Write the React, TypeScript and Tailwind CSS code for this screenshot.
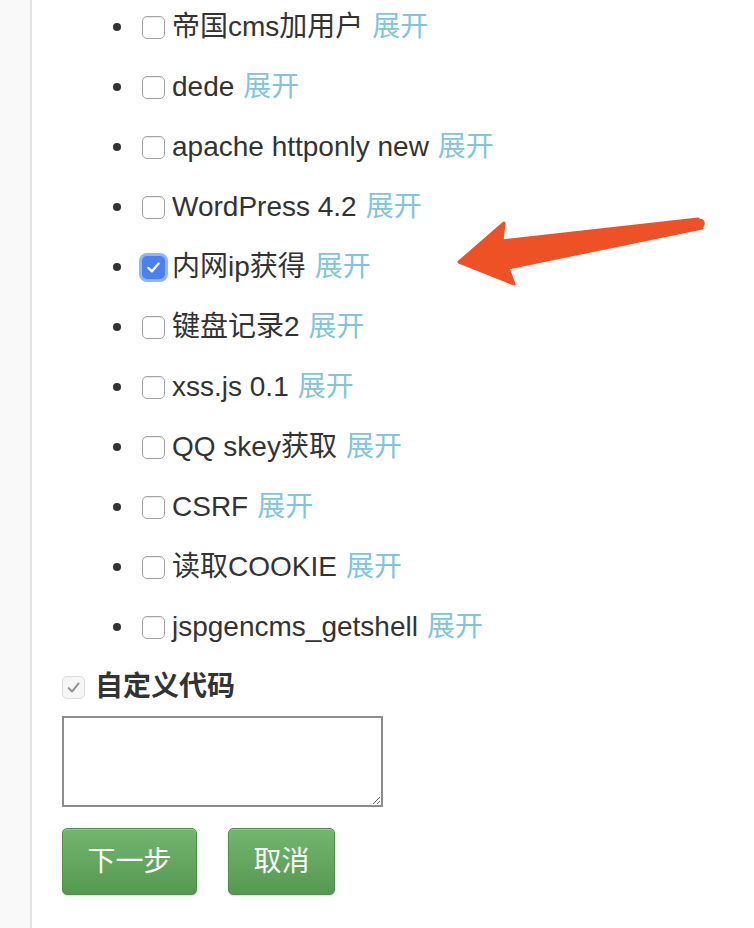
import React from "react";

const items: { label: string; checked?: boolean }[] = [
  { label: "帝国cms加用户" },
  { label: "dede" },
  { label: "apache httponly new" },
  { label: "WordPress 4.2" },
  { label: "内网ip获得", checked: true },
  { label: "键盘记录2" },
  { label: "xss.js 0.1" },
  { label: "QQ skey获取" },
  { label: "CSRF" },
  { label: "读取COOKIE" },
  { label: "jspgencms_getshell" },
];

function Box({ checked }: { checked?: boolean }) {
  if (checked) {
    return (
      <span className="relative flex h-[23px] w-[23px] shrink-0 items-center justify-center rounded-[5px] bg-[#4a80ef] ring-[3px] ring-[#93b5f6]">
        <svg width="17" height="17" viewBox="0 0 16 16">
          <path d="M3.2 8.4 L6.6 11.6 L12.8 4.2" fill="none" stroke="white" strokeWidth="2.2" strokeLinecap="round" strokeLinejoin="round" />
        </svg>
      </span>
    );
  }
  return (
    <span className="block h-[23px] w-[23px] shrink-0 rounded-[5px] border border-[#a3a3a3] bg-white shadow-[inset_0_1px_1px_rgba(0,0,0,0.08)]" />
  );
}

export default function App() {
  return (
    <div
      className="flex min-h-[928px] w-[754px] bg-white text-[#333]"
      style={{ fontFamily: '"Liberation Sans", Arial, "Noto Sans CJK SC", sans-serif' }}
    >
      <div className="w-[32px] shrink-0 border-r-2 border-[#e3e3e3] bg-[#f9f9f9]" />
      <div className="relative flex-1">
        <div className="mt-[-3px] pl-[81px]">
          {items.map((it) => (
            <div key={it.label} className="flex h-[60px] items-center">
              <span className="h-[8px] w-[8px] shrink-0 rounded-full bg-[#333]" />
              <span className="ml-[21px] block shrink-0">
                <Box checked={it.checked} />
              </span>
              <span className="ml-[7px] whitespace-nowrap text-[28px] leading-none">
                {it.label}
                <span className="ml-[9px] text-[#82c4d9]">展开</span>
              </span>
            </div>
          ))}
        </div>
        <div className="pl-[30px]">
          <div className="flex h-[60px] items-center">
            <span className="flex h-[23px] w-[23px] items-center justify-center rounded-[5px] border border-[#dcdcdc] bg-[#f6f6f6]">
              <svg width="17" height="17" viewBox="0 0 16 16">
                <path d="M3.4 8.6 L6.6 11.8 L12.8 4.2" fill="none" stroke="#909090" strokeWidth="1.9" strokeLinecap="round" strokeLinejoin="round" />
              </svg>
            </span>
            <span className="ml-[10px] text-[28px] font-bold leading-none">自定义代码</span>
          </div>
          <textarea className="mt-[-1px] block h-[91px] w-[321px] border-2 border-[#8d8d8d] bg-white" />
          <div className="mt-[21px] flex gap-[31px]">
            <button className="flex h-[67px] w-[135px] items-center justify-center rounded-[5px] border border-[#4f8f4a] bg-gradient-to-b from-[#74b671] to-[#55984f] text-[28px] text-white shadow-[inset_0_1px_0_rgba(255,255,255,0.25),0_1px_2px_rgba(0,0,0,0.15)]">
              下一步
            </button>
            <button className="flex h-[67px] w-[107px] items-center justify-center rounded-[5px] border border-[#4f8f4a] bg-gradient-to-b from-[#74b671] to-[#55984f] text-[28px] text-white shadow-[inset_0_1px_0_rgba(255,255,255,0.25),0_1px_2px_rgba(0,0,0,0.15)]">
              取消
            </button>
          </div>
        </div>
        <svg className="absolute left-[386px] top-[210px]" width="300" height="90" viewBox="418 210 300 90">
          <polygon
            points="459,262 504,223 502,241 698,219 702,228 508,268 514,284"
            fill="#ee5126"
            stroke="#ee5126"
            strokeWidth="3"
            strokeLinejoin="round"
          />
          <circle cx="700" cy="223.5" r="4.8" fill="#ee5126" />
        </svg>
      </div>
    </div>
  );
}
